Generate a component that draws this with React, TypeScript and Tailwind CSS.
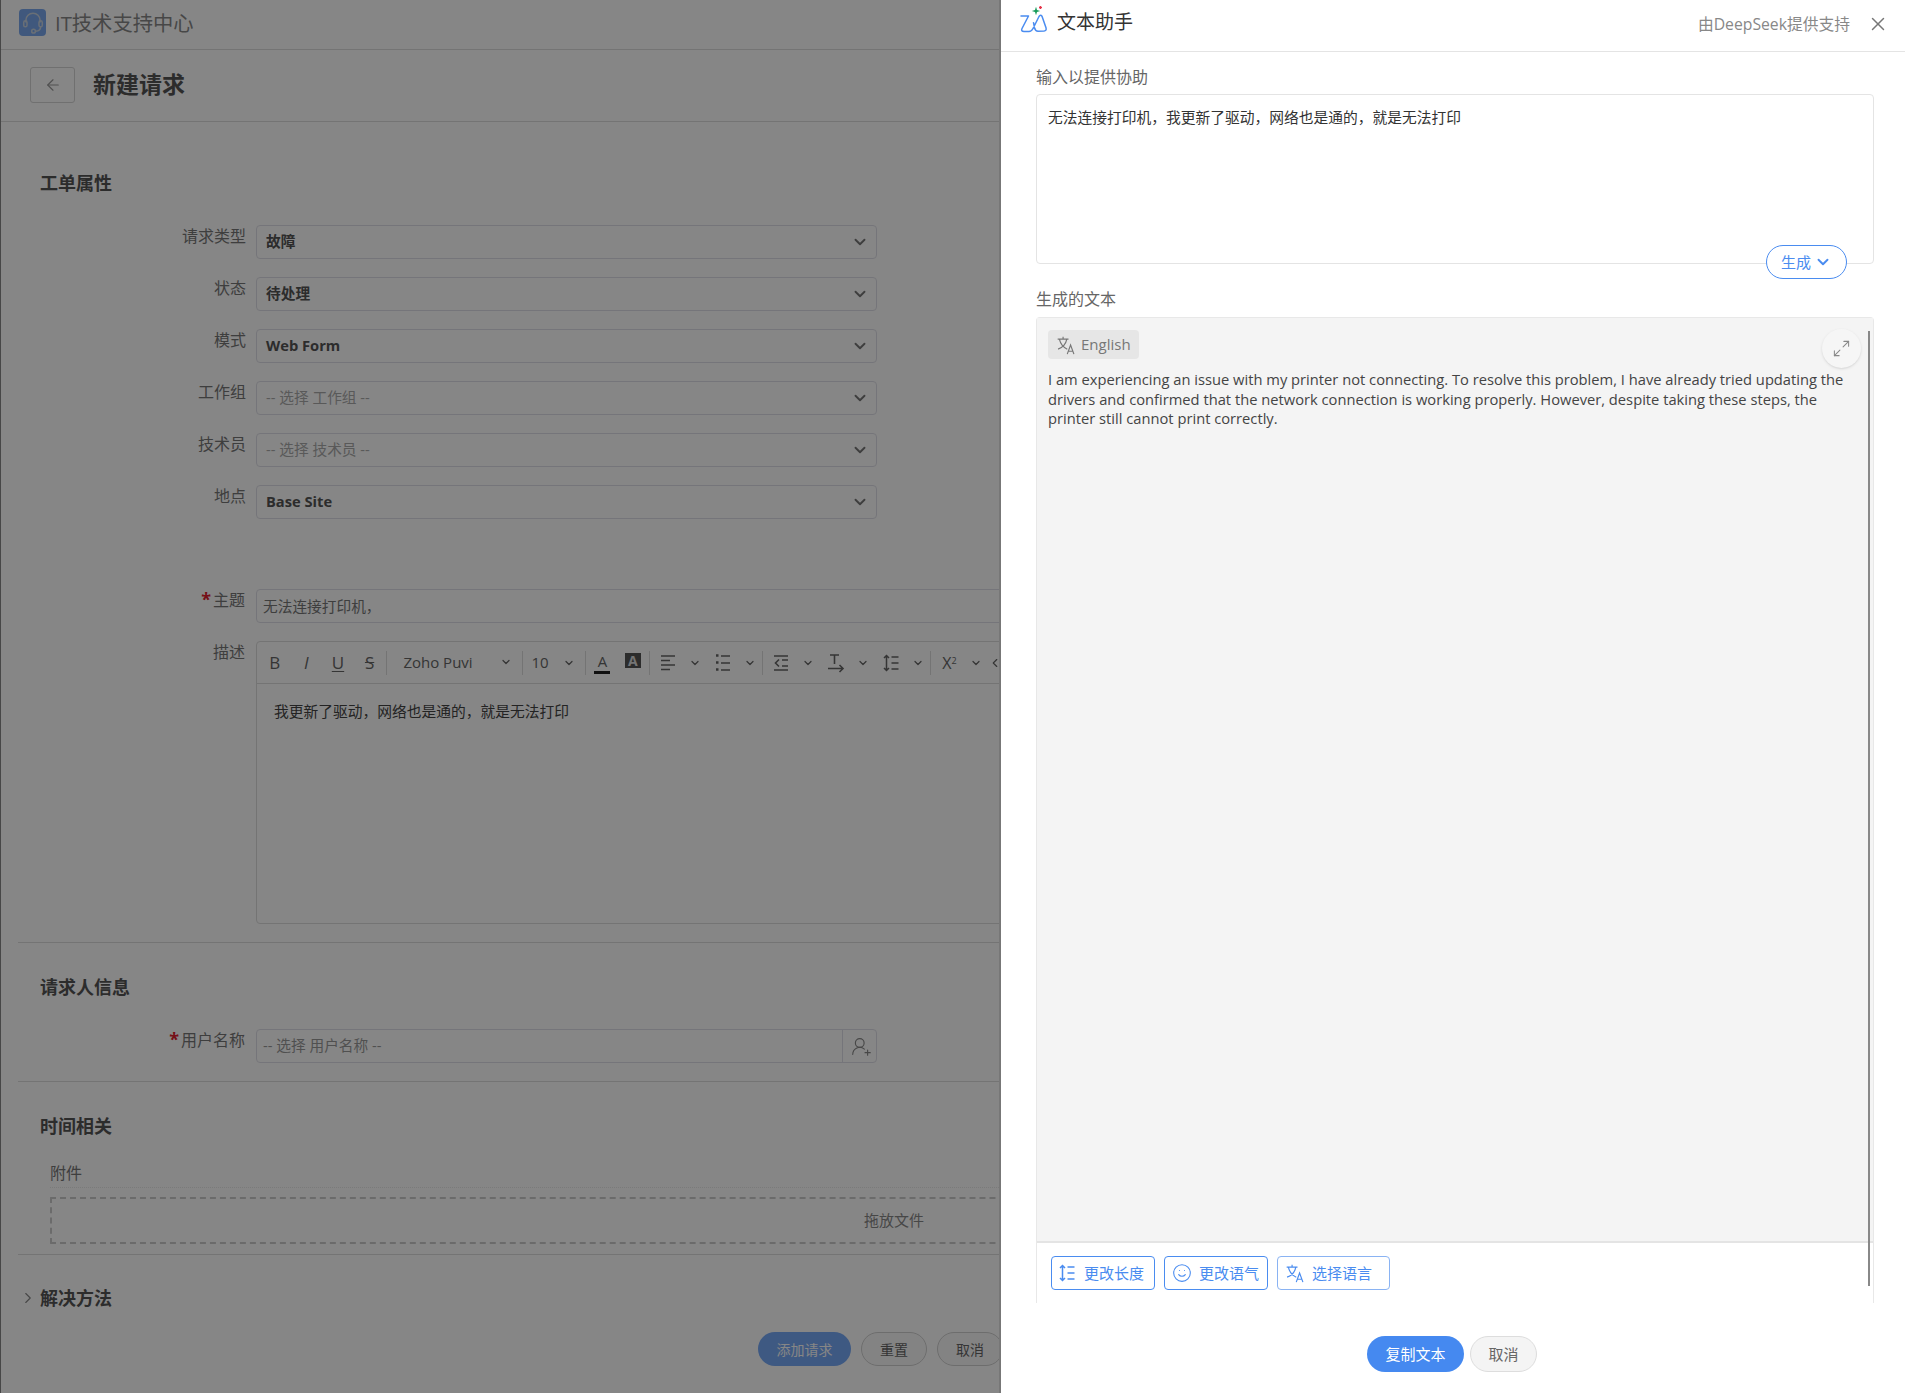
import { ArrowLeft, ChevronDown, ChevronLeft, ChevronRight, Maximize2, Smile, UserRoundPlus, X } from 'lucide-react'
import type { ReactNode } from 'react'

const fields = [
  { label: '请求类型', value: '故障' },
  { label: '状态', value: '待处理' },
  { label: '模式', value: 'Web Form' },
  { label: '工作组', value: '-- 选择 工作组 --', placeholder: true },
  { label: '技术员', value: '-- 选择 技术员 --', placeholder: true },
  { label: '地点', value: 'Base Site' },
]

function HeadsetLogo() {
  return (
    <div className="flex h-[27px] w-[27px] items-center justify-center rounded-[4px] bg-[#7aa8ee]">
      <svg width="24" height="24" viewBox="0 0 22 22" fill="none" stroke="#c9d3e0" strokeWidth="1.400" strokeLinecap="round">
        <path d="M4.500 10V8.500a6.500 6.500 0 0 1 13 0V10" />
        <rect x="2.500" y="9" width="3" height="5.500" rx="1.500" />
        <rect x="16.500" y="9" width="3" height="5.500" rx="1.500" />
        <path d="M18 14.500c0 2.500-2 4-4.500 4" />
        <circle cx="11.500" cy="18.500" r="1.700" />
      </svg>
    </div>
  )
}

function AssistantLogo() {
  return (
    <svg width="28" height="27" viewBox="0 0 28 27" fill="none" className="shrink-0">
      <path
        d="M1 10h7.500L2 22.500c-1 2 0 3 2 3h5c2 0 3-1 4-3l6-12c1-1.500 2-1.500 3-.2l4 11.500c.6 2-.2 3-2 3.200l-6 .2c-2 0-3-1.500-3.500-3.500l-1-5"
        stroke="#4a8cf0"
        strokeWidth="1.500"
        strokeLinecap="round"
        strokeLinejoin="round"
      />
      <path d="M16 .8l1 3.200 3.200 1-3.200 1-1 3.200-1-3.200-3.200-1 3.200-1z" fill="#169b5a" />
      <path d="M20.400 0v3M19 1.500h3" stroke="#e5344a" strokeWidth="1.300" />
    </svg>
  )
}

function TranslateIcon({ size = 20, stroke = 'currentColor' }: { size?: number; stroke?: string }) {
  return (
    <svg width={size} height={size} viewBox="0 0 24 24" fill="none" stroke={stroke} strokeWidth="1.400" className="shrink-0">
      <path d="M2 5h13M8.500 2v3M4 5c1.500 6 5 10 9.500 12M13 5c-1 5-5 10-10.500 12" />
      <path d="M13.500 23l4-11 4 11M15 19.500h5" />
    </svg>
  )
}

function Heading({ children }: { children: ReactNode }) {
  return <h2 className="text-[18px] leading-[24px] font-bold text-[#555]">{children}</h2>
}

function Label({ children, required }: { children: ReactNode; required?: boolean }) {
  return (
    <div className="-mt-[1px] w-[246px] shrink-0 pr-[2px] text-right text-[16px] leading-[24px] text-[#777]">
      {required && <span className="mr-[2px] text-[18px] leading-none font-bold text-[#e0202e]">*</span>}
      {children}
    </div>
  )
}

function SelectRow({ label, value, placeholder }: { label: string; value: string; placeholder?: boolean }) {
  return (
    <div className="flex">
      <Label>{label}</Label>
      <div className="ml-[8px] flex h-[34px] w-[621px] items-center justify-between rounded-[4px] border border-[#dfdfe8] bg-white pl-[9px] pr-[7px]">
        <span className={placeholder ? 'pb-[1px] text-[14.700px] text-[#aaa]' : 'pb-[1px] text-[14.700px] font-bold text-[#555]'}>{value}</span>
        <ChevronDown size={18} strokeWidth={2.500} className="text-[#777]" />
      </div>
    </div>
  )
}

function Sep() {
  return <div className="mx-[1px] h-[24px] w-px shrink-0 bg-[#ddd]" />
}

function Caret({ ml = '' }: { ml?: string }) {
  return <ChevronDown size={12} strokeWidth={2.500} className={`shrink-0 text-[#666] ${ml}`} />
}

function ToolGroup({ children }: { children: ReactNode }) {
  return (
    <div className="flex w-[55px] shrink-0 items-center">
      <div className="flex w-[34px] justify-center">{children}</div>
      <Caret ml="ml-[4px]" />
    </div>
  )
}

function ToolText({ children, className }: { children: ReactNode; className: string }) {
  return <div className={`flex w-[31.600px] shrink-0 justify-center text-[#666] ${className}`}>{children}</div>
}

function AlignIcon() {
  return (
    <svg width="16" height="18" viewBox="0 0 16 18" stroke="#666" strokeWidth="1.600">
      <path d="M1 2h14M1 6.500h9M1 11h14M1 15.500h9" />
    </svg>
  )
}

function ListIcon() {
  return (
    <svg width="16" height="18" viewBox="0 0 16 18" stroke="#666" strokeWidth="1.600">
      <path d="M1 1.500h2.500M1 8.500h2.500M1 15.500h2.500" strokeWidth="2.400" />
      <path d="M6 2h9M6 9h9M6 16h9" />
    </svg>
  )
}

function OutdentIcon() {
  return (
    <svg width="16" height="18" viewBox="0 0 16 18" stroke="#666" strokeWidth="1.600" fill="none">
      <path d="M1 2h14M1 16h14M9 6h6M9 12h6M6 5.500L2.500 9 6 12.500" />
    </svg>
  )
}

function ClearIcon() {
  return (
    <svg width="18" height="20" viewBox="0 0 18 20" stroke="#666" strokeWidth="1.600" fill="none">
      <path d="M3 2h9M7.500 2v9M1 15.500h15M12.500 12l3.500 3.500-3.500 3.500" />
    </svg>
  )
}

function LineHeightIcon({ stroke = '#666' }: { stroke?: string }) {
  return (
    <svg width="16" height="18" viewBox="0 0 16 18" stroke={stroke} strokeWidth="1.500" fill="none">
      <path d="M3.500 1.500v15M1 4l2.500-2.500L6 4M1 14l2.500 2.500L6 14M8.500 3h7M8.500 9h7M8.500 15h7" />
    </svg>
  )
}

function EditorToolbar() {
  return (
    <div className="flex h-[42px] items-center overflow-hidden border-b border-[#ddd] pl-[2px]">
      <ToolText className="text-[17px] leading-none font-normal">B</ToolText>
      <ToolText className="text-[17px] leading-none italic">I</ToolText>
      <ToolText className="text-[17px] leading-none underline underline-offset-2">U</ToolText>
      <ToolText className="text-[17px] leading-none line-through">S</ToolText>
      <Sep />
      <div className="flex w-[133px] shrink-0 items-center justify-between pb-[1px] pl-[15px] pr-[9px] text-[15px] text-[#666]">
        <span>Zoho Puvi</span>
        <Caret />
      </div>
      <Sep />
      <div className="flex w-[60px] shrink-0 items-center justify-between pl-[7px] pr-[9px] text-[15px] text-[#666]">
        <span>10</span>
        <Caret />
      </div>
      <Sep />
      <div className="flex w-[30px] shrink-0 flex-col items-center text-[15px] leading-[18px] text-[#666]">
        <span>A</span>
        <div className="mt-[1px] h-[3px] w-[16px] bg-[#222]" />
      </div>
      <div className="flex w-[31px] shrink-0 justify-center pb-[5px]">
        <span className="bg-[#555] px-[3px] text-[14px] leading-[15px] font-bold text-[#ddd]">A</span>
      </div>
      <Sep />
      <ToolGroup><AlignIcon /></ToolGroup>
      <ToolGroup><ListIcon /></ToolGroup>
      <Sep />
      <ToolGroup><OutdentIcon /></ToolGroup>
      <ToolGroup><ClearIcon /></ToolGroup>
      <ToolGroup><LineHeightIcon /></ToolGroup>
      <Sep />
      <div className="flex w-[56px] shrink-0 items-center">
        <div className="w-[34px] text-center text-[16px] text-[#666]">
          <span>X<sup className="text-[9px]">2</sup></span>
        </div>
        <Caret ml="ml-[4px]" />
      </div>
      <ChevronLeft size={14} strokeWidth={2} className="shrink-0 text-[#666]" />
    </div>
  )
}

function PillButton({ children, className }: { children: ReactNode; className: string }) {
  return (
    <button className={`flex items-center justify-center rounded-full ${className}`}>{children}</button>
  )
}

function ActionButton({ icon, text, className }: { icon: ReactNode; text: string; className: string }) {
  return (
    <button className={`flex h-[34px] items-center rounded-[4px] border border-[#4a8cf0] pl-[7px] text-[15px] text-[#4a8cf0] ${className}`}>
      {icon}
      <span>{text}</span>
    </button>
  )
}

export default function App() {
  return (
    <div className="relative h-[1393px] w-full overflow-hidden bg-white font-['Open_Sans','Noto_Sans_CJK_SC',sans-serif]">
      {/* Request form behind the drawer */}
      <div className="h-full border-l border-[#888]">
        <div className="flex h-[50px] items-center gap-[9px] border-b border-[#ddd] pb-[4px] pl-[18px]">
          <HeadsetLogo />
          <span className="mt-[1px] text-[20.300px] text-[#888]">IT技术支持中心</span>
        </div>
        <div className="flex h-[72px] items-center gap-[18px] border-b border-[#ddd] pb-[2px] pl-[29px]">
          <button className="flex h-[36px] w-[45px] items-center justify-center rounded-[3px] border border-[#d5d5d5]">
            <ArrowLeft size={18} strokeWidth={1.500} className="text-[#999]" />
          </button>
          <h1 className="text-[23px] font-bold text-[#555]">新建请求</h1>
        </div>

        <div className="pl-[39px] pt-[49px]">
          <Heading>工单属性</Heading>
        </div>
        <div className="mt-[30px] flex flex-col gap-[18px] pl-[1px]">
          {fields.map((f) => (
            <SelectRow key={f.label} label={f.label} value={f.value} placeholder={f.placeholder} />
          ))}
        </div>

        <div className="mt-[70px] flex">
          <Label required>主题</Label>
          <div className="ml-[9px] flex h-[34px] flex-1 items-center rounded-l-[4px] border border-[#dfdfe8] pl-[6px] text-[14.700px] text-[#777]">
            无法连接打印机，
          </div>
        </div>
        <div className="mt-[18px] flex">
          <Label>描述</Label>
          <div className="ml-[9px] h-[283px] flex-1 rounded-l-[4px] border border-[#ddd]">
            <EditorToolbar />
            <p className="pl-[17px] pt-[16px] text-[14.750px] leading-[22px] text-[#444]">我更新了驱动，网络也是通的，就是无法打印</p>
          </div>
        </div>

        <div className="ml-[17px] mt-[18px] border-t border-[#ddd] pl-[22px] pt-[32px]">
          <Heading>请求人信息</Heading>
        </div>
        <div className="mt-[30px] flex">
          <Label required>用户名称</Label>
          <div className="ml-[9px] flex h-[34px] w-[621px] items-center rounded-[4px] border border-[#dfdfe8]">
            <span className="flex-1 pb-[2px] pl-[6px] text-[14.700px] text-[#999]">-- 选择 用户名称 --</span>
            <div className="flex h-full w-[34px] items-center justify-center border-l border-[#dfdfe8] pl-[3px]">
              <UserRoundPlus size={21} strokeWidth={1.300} className="text-[#888]" />
            </div>
          </div>
        </div>

        <div className="ml-[17px] mt-[18px] border-t border-[#ddd] pl-[22px] pt-[32px]">
          <Heading>时间相关</Heading>
        </div>
        <div className="ml-[49px] mt-[24px] border-b border-dotted border-[#e8e8e8] pb-[3px] text-[16px] leading-[22px] text-[#777]">附件</div>
        <div className="ml-[49px] mt-[9px] flex h-[47px] items-center rounded-[1px] border-2 border-dashed border-[#ccc] pl-[812px] text-[15px] text-[#888]">
          拖放文件
        </div>

        <div className="ml-[17px] mt-[10px] flex items-center border-t border-[#ddd] pt-[31px]">
          <ChevronRight size={18} strokeWidth={1.500} className="ml-[1px] text-[#888]" />
          <span className="ml-[3px]"><Heading>解决方法</Heading></span>
        </div>
        <div className="ml-[757px] mt-[22px] flex gap-[10px] text-[14px]">
          <PillButton className="h-[34px] w-[93px] bg-[#76a9f7] text-white">添加请求</PillButton>
          <PillButton className="h-[34px] w-[66px] border border-[#d0d0d0] bg-[#fafafa] text-[#666]">重置</PillButton>
          <PillButton className="h-[34px] w-[66px] border border-[#d0d0d0] bg-[#fafafa] text-[#666]">取消</PillButton>
        </div>
      </div>

      {/* Dim layer */}
      <div className="absolute inset-0 bg-black/[0.475]" />

      {/* Text assistant drawer */}
      <div className="absolute bottom-0 right-0 top-0 flex w-[906px] flex-col border-l-2 border-[#777] bg-white">
        <div className="flex h-[52px] shrink-0 items-start border-b border-[#e4e4e4] pl-[19px] pr-[16px]">
          <div className="mt-[6px]"><AssistantLogo /></div>
          <span className="ml-[9px] mt-[8px] text-[19px] leading-[28px] text-[#333]">文本助手</span>
          <span className="ml-auto mt-[13px] text-[15.750px] leading-[22px] text-[#888]">由DeepSeek提供支持</span>
          <X size={22} strokeWidth={1.600} className="ml-[17px] mt-[13px] text-[#777]" />
        </div>

        <div className="pl-[35px] pr-[31px]">
          <div className="mt-[14px] text-[16px] leading-[22px] text-[#666]">输入以提供协助</div>
          <div className="relative mt-[6px] h-[170px] rounded-[4px] border border-[#e4e4e4] pl-[11px] pt-[11px] text-[14.750px] leading-[22px] text-[#333]">
            无法连接打印机，我更新了驱动，网络也是通的，就是无法打印
            <PillButton className="absolute -bottom-[16px] right-[26px] h-[34px] w-[81px] gap-[3px] border border-[#4a8cf0] bg-white text-[15px] text-[#4a8cf0]">
              生成 <ChevronDown size={18} strokeWidth={2.500} />
            </PillButton>
          </div>

          <div className="mt-[24px] text-[16px] leading-[22px] text-[#666]">生成的文本</div>

          <div className="relative mt-[7px] h-[986px] rounded-t-[4px] border-x border-t border-[#e8e8e8]">
            <div className="h-[923px] bg-[#f4f4f4] pl-[11px] pt-[12px]">
              <div className="flex h-[29px] w-[91px] items-center gap-[5px] rounded-[4px] bg-[#e6e6e6] pl-[8px] text-[15px] text-[#777]">
                <TranslateIcon size={20} />
                English
              </div>
              <p className="mt-[11px] pr-[18px] text-[14.710px] leading-[19.500px] text-[#444]">
                I am experiencing an issue with my printer not connecting. To resolve this problem, I have already tried updating the drivers and confirmed that the network connection is working properly. However, despite taking these steps, the printer still cannot print correctly.
              </p>
            </div>
            <div className="flex gap-[9px] border-t-2 border-[#e4e4e4] pl-[14px] pt-[13px]">
              <ActionButton
                className="w-[104px] gap-[9px]"
                icon={<LineHeightIcon stroke="#4a8cf0" />}
                text="更改长度"
              />
              <ActionButton
                className="w-[104px] gap-[7px]"
                icon={<Smile size={20} strokeWidth={1.300} />}
                text="更改语气"
              />
              <ActionButton
                className="w-[113px] gap-[7px] border-[#8ab3f3]"
                icon={<TranslateIcon size={20} />}
                text="选择语言"
              />
            </div>

            <button className="absolute right-[12px] top-[11px] flex h-[39px] w-[39px] items-center justify-center rounded-full bg-[#f6f6f6] shadow-sm">
              <Maximize2 size={19} strokeWidth={1.300} className="text-[#888]" />
            </button>
            <div className="absolute right-[3px] top-[13px] h-[955px] w-[2px] bg-[#888]" />
          </div>

          <div className="mt-[33px] flex justify-center gap-[6px] pr-[6px] text-[15px]">
            <PillButton className="h-[36px] w-[97px] bg-[#4589f0] text-white">复制文本</PillButton>
            <PillButton className="h-[36px] w-[67px] border border-[#ddd] bg-[#f4f4f4] text-[#666]">取消</PillButton>
          </div>
        </div>
      </div>
    </div>
  )
}
